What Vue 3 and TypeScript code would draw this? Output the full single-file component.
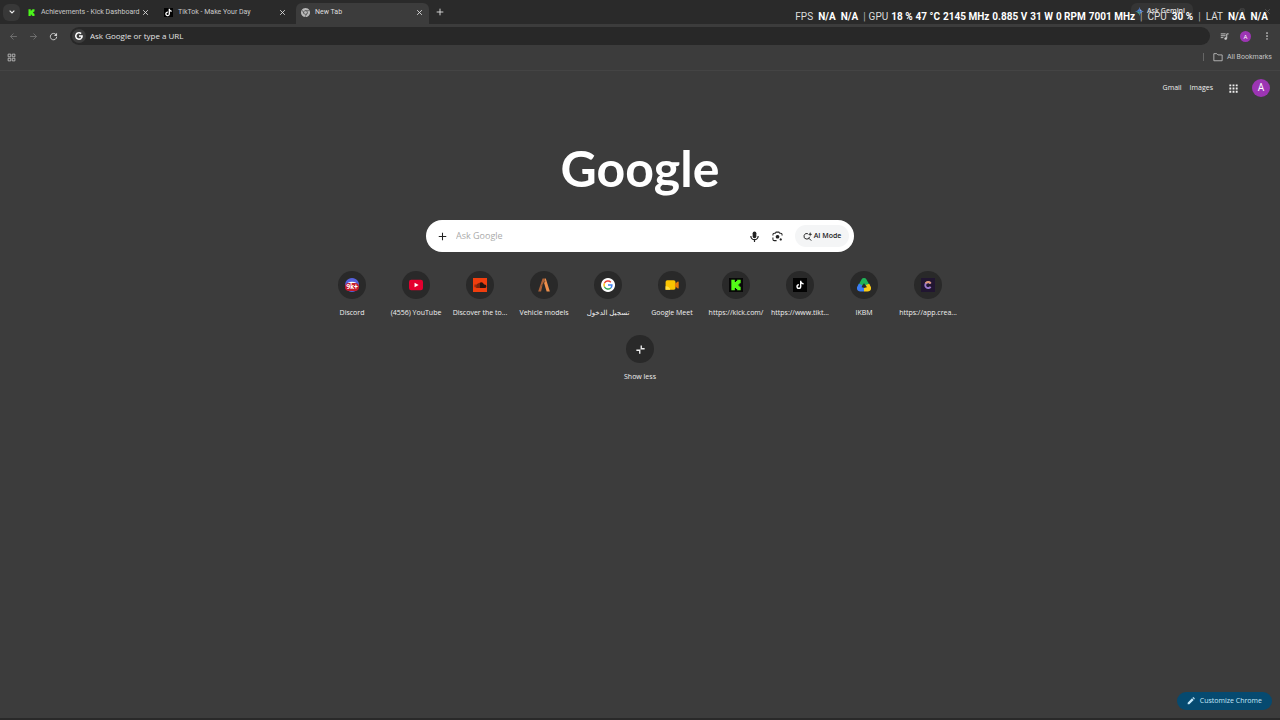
<script setup lang="ts">
import { h, ref, type FunctionalComponent } from 'vue'

interface Shape { d: string; fill?: string; stroke?: string; width?: number }
interface Drawing { size: number; shapes: Shape[] }

const line = (d: string, width = 2, stroke = 'currentColor'): Shape => ({ d, stroke, width })
const solid = (d: string, fill = 'currentColor'): Shape => ({ d, fill })

const note = 'M19.59 6.69a4.83 4.83 0 0 1-3.77-4.25V2h-3.45v13.67a2.89 2.89 0 0 1-5.2 1.74 2.89 2.89 0 0 1 2.31-4.64c.3 0 .59.04.88.13V9.4a6.84 6.84 0 0 0-1-.05A6.33 6.33 0 0 0 5 20.1a6.34 6.34 0 0 0 10.86-4.43v-7a8.16 8.16 0 0 0 4.77 1.52v-3.4a4.85 4.85 0 0 1-1-.1z'
const gTop = 'M24 9.5c3.54 0 6.71 1.22 9.21 3.6l6.85-6.85C35.9 2.38 30.47 0 24 0 14.62 0 6.51 5.38 2.56 13.22l7.98 6.19C12.43 13.72 17.74 9.5 24 9.5z'
const gRight = 'M46.98 24.55c0-1.57-.15-3.09-.38-4.55H24v9.02h12.94c-.58 2.96-2.26 5.48-4.78 7.18l7.73 6c4.51-4.18 7.09-10.36 7.09-17.65z'
const gLeft = 'M10.53 28.59c-.48-1.45-.76-2.99-.76-4.59s.27-3.14.76-4.59l-7.98-6.19C.92 16.46 0 20.12 0 24c0 3.88.92 7.54 2.56 10.78l7.97-6.19z'
const gBottom = 'M24 48c6.48 0 11.93-2.13 15.89-5.81l-7.73-6c-2.15 1.45-4.92 2.3-8.16 2.3-6.26 0-11.57-4.22-13.47-9.91l-7.98 6.19C6.51 42.62 14.62 48 24 48z'
const kickMark = 'M4 3h6v4h2V5h2V3h6v6h-2v2h-2v2h2v2h2v6h-6v-2h-2v-2h-2v4H4z'

const drawings: Record<string, Drawing> = {
  chevron: { size: 24, shapes: [line('M5 8l7 7 7-7', 3.4)] },
  close: { size: 24, shapes: [line('M4 4l16 16M20 4L4 20', 3)] },
  plus: { size: 24, shapes: [line('M12 2v20M2 12h20', 2.8)] },
  back: { size: 24, shapes: [line('M21 12H4M12 4l-8 8 8 8', 2.2)] },
  forward: { size: 24, shapes: [line('M3 12h17M12 4l8 8-8 8', 2.2)] },
  reload: { size: 24, shapes: [line('M19 7.5a8.5 8.5 0 1 0 1.5 5', 2.5), solid('M21.5 2v8.5H13z')] },
  apps: { size: 24, shapes: [line('M3 3h7v7H3zM14 3h7v7h-7zM3 14h7v7H3zM14 14h7v7h-7z', 2)] },
  folder: { size: 24, shapes: [line('M2 4h7l3 3h10v14H2z', 2)] },
  media: { size: 24, shapes: [line('M2 5h13M2 10h13M2 15h7', 2.4), line('M18 17V5h5', 2.6), solid('M15 14a3.5 3.5 0 1 0 .1 0z')] },
  more: { size: 24, shapes: [solid('M12 1a2.3 2.3 0 1 0 .1 0zM12 9.7a2.3 2.3 0 1 0 .1 0zM12 18.4a2.3 2.3 0 1 0 .1 0z')] },
  grid: { size: 24, shapes: [solid('M1 1h5v5H1zM9.5 1h5v5h-5zM18 1h5v5h-5zM1 9.5h5v5H1zM9.5 9.5h5v5h-5zM18 9.5h5v5h-5zM1 18h5v5H1zM9.5 18h5v5h-5zM18 18h5v5h-5z')] },
  mic: { size: 24, shapes: [solid('M12 1a4 4 0 0 0-4 4v7a4 4 0 0 0 8 0V5a4 4 0 0 0-4-4z'), line('M4 11a8 8 0 0 0 16 0M12 18v6', 2.6)] },
  lens: { size: 24, shapes: [line('M2 10V8a3 3 0 0 1 3-3h2l2-2.5h6L17 5h2a3 3 0 0 1 3 3v2M2 14v4a3 3 0 0 0 3 3h5', 2.3), solid('M12 8.5a4 4 0 1 0 .1 0zM19 16a2.5 2.5 0 1 0 .1 0z')] },
  aiSearch: { size: 24, shapes: [line('M13 4.5A7.5 7.5 0 1 0 17.5 13M15.5 16.5L22 23', 2.6), solid('M19 0l1.6 4.4L25 6l-4.4 1.6L19 12l-1.6-4.4L13 6l4.4-1.6z')] },
  pencil: { size: 24, shapes: [solid('M2 22v-5L15 4l5 5L7 22zM16.5 2.5L18 1h2l3 3v2l-1.5 1.5z')] },
  minimize: { size: 24, shapes: [line('M4 12h16', 2)] },
  restore: { size: 24, shapes: [line('M3 8h13v13H3zM8 8V3h13v13h-5', 2)] },
  collapse: { size: 24, shapes: [line('M14 1v9h9M1 14h9v9', 3.6)] },
  gemini: { size: 24, shapes: [solid('M12 0c1 7 5 11 12 12H12z', '#8aa6ed'), solid('M24 12c-7 1-11 5-12 12V12z', '#4f8de8'), solid('M12 24C11 17 7 13 0 12h12z', '#46a884'), solid('M0 12c7-1 11-5 12-12v12z', '#427bd8')] },
  chrome: { size: 24, shapes: [solid('M12 0a12 12 0 1 0 .1 0z', '#b9b9b9'), line('M12 7h11M8 14.5L2.5 5.5M16 14.5L10.5 24', 2, '#555'), line('M12 7a5 5 0 1 0 .1 0z', 2.2, '#4b4b4b')] },
  kick: { size: 24, shapes: [solid(kickMark, '#4cf51b')] },
  kickTile: { size: 24, shapes: [solid('M0 0h24v24H0z', '#080808'), solid(kickMark, '#53fc18')] },
  tiktok: { size: 24, shapes: [solid('M0 0h24v24H0z', '#030303'), solid(note, '#fff')] },
  tiktokTile: { size: 32, shapes: [solid('M0 0h32v32H0z', '#030303'), solid('M21 10a5 5 0 0 1-2-4h-3v13.5a2.6 2.6 0 1 1-2.6-2.6v-3.2a5.8 5.8 0 1 0 5.8 5.8V13a8 8 0 0 0 5 1.6v-3.4a5 5 0 0 1-3.2-1.2z', '#fff')] },
  googleMono: { size: 48, shapes: [gTop, gRight, gLeft, gBottom].map((d) => solid(d, '#fff')) },
  google: { size: 64, shapes: [solid('M32 0a32 32 0 1 0 .1 0z', '#fff'), line('M45 19A18.5 18.5 0 0 0 15.5 24', 6.5, '#ea4335'), line('M15.5 24a18.5 18.5 0 0 0 0 16', 6.5, '#fbbc05'), line('M15.5 40A18.5 18.5 0 0 0 44.5 45.5', 6.5, '#34a853'), line('M32 32h18a18.5 18.5 0 0 1-5.5 13.5', 6.5, '#4285f4')] },
  discord: { size: 24, shapes: [solid('M12 0a12 12 0 1 0 .1 0z', '#5662dc'), solid('M5 8q7-3 14 0v3H5z', '#fff')] },
  youtube: { size: 24, shapes: [solid('M4 3h16q4 0 4 4v10q0 4-4 4H4q-4 0-4-4V7q0-4 4-4z', '#e4002f'), solid('M9.5 8l7 4-7 4z', '#fff')] },
  soundcloud: { size: 24, shapes: [solid('M0 0h24v24H0z', '#f03e0e'), solid('M11 8.5q5-3 8 2.500 4-.5 4 3t-3 3h-9zM9 9h1v8H9zM7 10h1v7H7zM5 11h1v6H5zM3 11h1v5H3z', '#24130f')] },
  vehicle: { size: 24, shapes: [solid('M9.5 1h4l-2 7-2.5 6-2 9H2z', '#ad6238'), solid('M13.5 1h1.500l7 22h-5.500L12 8z', '#ef8f4c'), line('M8 14l6-9', 1, '#292929')] },
  meet: { size: 24, shapes: [solid('M4 4h11q3 0 3 3v10q0 3-3 3H1V7q0-3 3-3z', '#fbc400'), solid('M17 10l5-4q1.500-.5 1.500 1v10q0 1.500-1.500 1l-5-4z', '#e87909'), solid('M1 14q7 0 8 6H1z', '#ffdf45')] },
  drive: { size: 24, shapes: [solid('M8 2q1-2 4-2t4 2l5 9-5 3-4-5-4 5-5-3z', '#20b458'), solid('M3 10L0 16q-1 7 6 7h6l1-6-5-1 1-4z', '#3b7df3'), solid('M21 10l3 6q1 7-6 7h-6v-6l5-1-2-4z', '#f9cc18')] },
  creator: { size: 24, shapes: [solid('M0 0h24v24H0z', '#211631'), line('M16.5 9.5a5 5 0 1 0 0 5.500', 3.2, '#9c78cf'), line('M16.5 9.5A5 5 0 0 0 8 9', 3.2, '#df9a75')] },
}

const Glyph: FunctionalComponent<{ name: string }> = (props) => {
  const drawing = drawings[props.name]
  return h('svg', { viewBox: `0 0 ${drawing.size} ${drawing.size}`, 'aria-hidden': 'true' },
    drawing.shapes.map((s) => h('path', { d: s.d, fill: s.fill ?? 'none', stroke: s.stroke, 'stroke-width': s.width })))
}
Glyph.props = ['name']

const tabs = [
  { title: 'Achievements - Kick Dashboard', icon: 'kick' },
  { title: 'TikTok - Make Your Day', icon: 'tiktok' },
  { title: 'New Tab', icon: 'chrome' },
]
const activeTab = ref(2)
const address = ref('')
const query = ref('')

const shortcuts = [
  { label: 'Discord', icon: 'discord', badge: '9k+' },
  { label: '(4556) YouTube', icon: 'youtube' },
  { label: 'Discover the to...', icon: 'soundcloud' },
  { label: 'Vehicle models', icon: 'vehicle' },
  { label: 'تسجيل الدخول', icon: 'google' },
  { label: 'Google Meet', icon: 'meet' },
  { label: 'https://kick.com/', icon: 'kickTile' },
  { label: 'https://www.tikt...', icon: 'tiktokTile' },
  { label: 'IKBM', icon: 'drive' },
  { label: 'https://app.crea...', icon: 'creator' },
]

const stats = [
  { name: 'FPS', values: ['N/A', 'N/A'] },
  { name: 'GPU', values: ['18 %', '47 °C', '2145 MHz', '0.885 V', '31 W', '0 RPM', '7001 MHz'] },
  { name: 'CPU', values: ['30 %'] },
  { name: 'LAT', values: ['N/A', 'N/A'] },
]
</script>

<template>
  <div class="browser">
    <header class="tabstrip">
      <button class="tab-search" aria-label="Search tabs"><Glyph name="chevron" class="i8" /></button>
      <nav class="tabs" aria-label="Tabs">
        <div v-for="(tab, i) in tabs" :key="tab.title" class="tab" :class="{ active: i === activeTab }">
          <button class="tab-title" @click="activeTab = i"><Glyph :name="tab.icon" class="i9" />{{ tab.title }}</button>
          <button class="tab-close" :aria-label="'Close ' + tab.title"><Glyph name="close" class="i7" /></button>
        </div>
      </nav>
      <button class="new-tab" aria-label="New tab"><Glyph name="plus" class="i8" /></button>
      <div class="window-tools">
        <button class="gemini"><Glyph name="gemini" class="i9" />Ask Gemini</button>
        <button aria-label="Minimize"><Glyph name="minimize" class="i7" /></button>
        <button aria-label="Restore"><Glyph name="restore" class="i7" /></button>
        <button aria-label="Close window"><Glyph name="close" class="i7" /></button>
      </div>
    </header>
    <div class="toolbar">
      <button class="tool dim" aria-label="Back"><Glyph name="back" class="i9" /></button>
      <button class="tool dim" aria-label="Forward"><Glyph name="forward" class="i9" /></button>
      <button class="tool" aria-label="Reload"><Glyph name="reload" class="i9" /></button>
      <label class="address">
        <span class="site"><Glyph name="googleMono" class="i8" /></span>
        <input v-model="address" aria-label="Address" placeholder="Ask Google or type a URL" />
      </label>
      <button class="tool" aria-label="Media controls"><Glyph name="media" class="i9" /></button>
      <button class="tool" aria-label="Profile"><span class="avatar small">A</span></button>
      <button class="tool" aria-label="Menu"><Glyph name="more" class="i8" /></button>
    </div>
    <div class="bookmarks">
      <button class="tool" aria-label="Tab groups"><Glyph name="apps" class="i9" /></button>
      <button class="all"><Glyph name="folder" class="i10" />All Bookmarks</button>
    </div>

    <main class="page">
      <nav class="account">
        <a href="#gmail">Gmail</a>
        <a href="#images">Images</a>
        <button aria-label="Google apps"><Glyph name="grid" class="i9" /></button>
        <button aria-label="Account"><span class="avatar">A</span></button>
      </nav>
      <h1 class="logo">Google</h1>
      <form class="search" @submit.prevent>
        <button type="button" aria-label="Add"><Glyph name="plus" class="i9" /></button>
        <input v-model="query" aria-label="Search" placeholder="Ask Google" />
        <button type="button" aria-label="Voice search"><Glyph name="mic" class="i11" /></button>
        <button type="button" aria-label="Image search"><Glyph name="lens" class="i11" /></button>
        <button type="button" class="ai"><Glyph name="aiSearch" class="i9" />AI Mode</button>
      </form>
      <nav class="shortcuts" aria-label="Shortcuts">
        <a v-for="s in shortcuts" :key="s.label" href="#open" class="shortcut">
          <span class="disc"><Glyph :name="s.icon" class="i14" /><span v-if="s.badge" class="badge">{{ s.badge }}</span></span>
          <span class="label">{{ s.label }}</span>
        </a>
      </nav>
      <button class="shortcut less">
        <span class="disc"><Glyph name="collapse" class="i9" /></span>
        <span class="label">Show less</span>
      </button>
      <button class="customize"><Glyph name="pencil" class="i8" />Customize Chrome</button>
    </main>

    <div class="stats" aria-label="Performance">
      <div v-for="group in stats" :key="group.name" class="group" :class="{ dense: group.values.length > 2 }">
        <span>{{ group.name }}</span>
        <b v-for="(value, i) in group.values" :key="i">{{ value }}</b>
      </div>
    </div>
  </div>
</template>

<style>
body { margin: 0; background: #3c3c3c; }
</style>

<style scoped>
.browser {
  position: relative;
  display: flex;
  flex-direction: column;
  min-height: 100vh;
  box-sizing: border-box;
  border-bottom: 2px solid #292929;
  background: #3c3c3c;
  color: #f0f0f0;
  font: 7px/12px "Open Sans", "Noto Sans", "DejaVu Sans", sans-serif;
}
button, input { font: inherit; color: inherit; background: none; border: 0; padding: 0; margin: 0; min-width: 0; outline: 0; }
button { display: flex; align-items: center; justify-content: center; white-space: nowrap; }
a { color: inherit; text-decoration: none; }
svg { display: block; flex: none; }
.i7 { width: 7px; height: 7px; }
.i8 { width: 8px; height: 8px; }
.i9 { width: 9px; height: 9px; }
.i10 { width: 10px; height: 10px; }
.i11 { width: 11px; height: 11px; }
.i14 { width: 14px; height: 14px; }

.tabstrip { display: flex; align-items: center; height: 24px; padding: 0 3px; background: #2a2a2a; }
.tab-search { width: 17px; height: 17px; border-radius: 6px; background: #383838; }
.tabs { display: flex; align-self: stretch; gap: 4px; margin-left: 2px; }
.tab { display: flex; align-items: center; width: 133px; box-sizing: border-box; margin-top: 3px; padding: 0 6px 3px 5px; color: #c9c9c9; border-radius: 6px 6px 0 0; font-family: Roboto, sans-serif; }
.tab.active { background: #3c3c3c; color: #dedede; }
.tab-title { flex: 1; justify-content: flex-start; gap: 5px; }
.tab-close { color: #dedede; }
.new-tab { margin-left: 7px; color: #dedede; }
.window-tools { display: flex; align-items: center; gap: 19px; margin: 0 6px 2px auto; color: #5c5c5c; }
.gemini { height: 17px; padding: 0 8px 0 4px; gap: 3px; border-radius: 6px; background: #353535; color: #e0e0e0; font: 600 7px/12px "Open Sans", sans-serif; }

.toolbar { display: flex; align-items: center; height: 24px; padding: 0 3px; }
.tool { width: 21px; height: 18px; color: #cfcfcf; }
.tool.dim { width: 20px; color: #777; }
.address { display: flex; flex: 1; align-items: center; gap: 4px; height: 18px; margin: 0 4px 0 6px; padding: 0 2px; border-radius: 9px; background: #282828; font-size: 8px; }
.address input { flex: 1; }
.address input::placeholder { color: #e3e3e3; opacity: 1; }
.site { display: grid; place-items: center; width: 14px; height: 14px; border-radius: 50%; background: #3c3c3c; }
.avatar { display: grid; place-items: center; width: 18px; height: 18px; border-radius: 50%; background: #9c35b3; color: #fff; font: 10px/18px Roboto, sans-serif; }
.avatar.small { width: 11px; height: 11px; font-size: 6px; line-height: 11px; }
.bookmarks { display: flex; align-items: center; justify-content: space-between; height: 18px; padding: 0 8px 4px 3px; border-bottom: 1px solid #444; }
.bookmarks .tool { width: 17px; }
.all { gap: 4px; padding-left: 9px; border-left: 1px solid #666; height: 8px; color: #c4c4c4; font-family: Roboto, sans-serif; }

.page { display: flex; flex: 1; flex-direction: column; align-items: center; }
.account { display: flex; align-self: stretch; align-items: center; justify-content: flex-end; height: 18px; padding: 8px 10px 0; gap: 8px; }
.account button { margin-left: 6px; }
.account a + button { margin-left: 8px; }
.logo { margin: 33px 0 0; color: #fff; font: 700 50px/76px Lato, sans-serif; }
.search { display: flex; align-items: center; width: 428px; max-width: 100%; height: 32px; box-sizing: border-box; margin-top: 14px; padding: 0 5px 0 12px; border-radius: 16px; background: #fff; color: #222; gap: 12px; }
.search input { flex: 1; margin-left: -3px; font-size: 9px; }
.search input::placeholder { color: #aaa; opacity: 1; }
.search .ai { gap: 2px; width: 54px; height: 22px; border-radius: 11px; background: #f4f5f6; font-size: 7px; font-weight: 600; }
.shortcuts { display: grid; grid-template-columns: repeat(10, 64px); margin-top: 19px; }
.shortcut { display: flex; flex-direction: column; align-items: center; justify-content: flex-start; height: 64px; gap: 8px; }
.disc { position: relative; display: grid; place-items: center; width: 28px; height: 28px; border-radius: 50%; background: #292929; color: #eee; }
.label { white-space: nowrap; }
.badge { position: absolute; left: 7px; top: 12px; width: 14px; border-radius: 4px; background: #c41b2c; color: #fff; font: 700 7px/8px Roboto, sans-serif; text-align: center; }
.customize { align-self: flex-end; margin: auto 8px 8px 0; height: 18px; padding: 0 10px; gap: 5px; border-radius: 9px; background: #064a70; color: #c5e8fa; }

.stats { position: absolute; top: 11px; right: 12px; display: flex; color: #ddd; font: 10px/12px Roboto, sans-serif; white-space: nowrap; }
.group { display: flex; gap: 5px; }
.group.dense { gap: 3px; }
.group b { color: #fff; }
.group + .group::before { content: "|"; margin-left: 5px; color: #aaa; }
</style>
